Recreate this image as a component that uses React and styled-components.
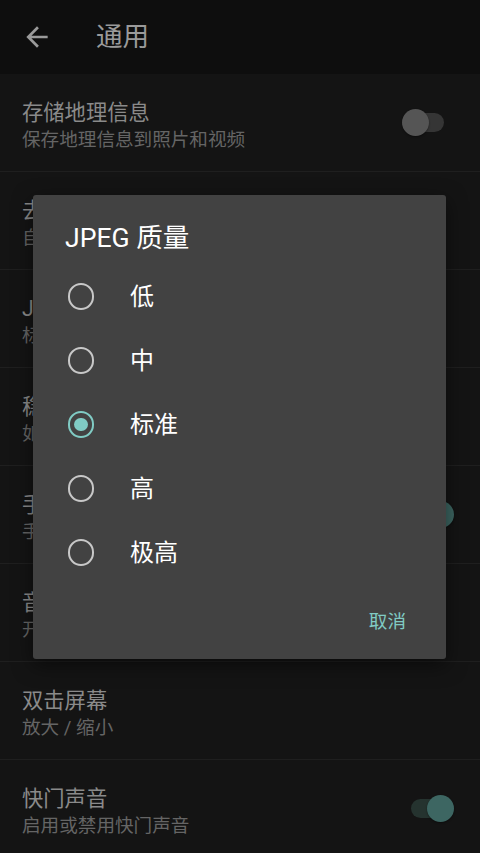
import React from 'react'
import styled, { createGlobalStyle } from 'styled-components'

const GlobalStyle = createGlobalStyle`
  html, body {
    margin: 0;
    padding: 0;
    background: #141414;
  }
  * {
    box-sizing: border-box;
  }
`;

const settings = [
    { title: '存储地理信息', summary: '保存地理信息到照片和视频', toggle: 'off' },
    { title: '去除闪烁', summary: '自动' },
    { title: 'JPEG 质量', summary: '标准' },
    { title: '稳定器', summary: '如果设备支持，则启用防抖' },
    { title: '手势拍照', summary: '手掌张开时自动拍照', toggle: 'on' },
    { title: '音量键', summary: '开始拍照' },
    { title: '双击屏幕', summary: '放大 / 缩小' },
    { title: '快门声音', summary: '启用或禁用快门声音', toggle: 'on' },
];

const qualities = ['低', '中', '标准', '高', '极高'];

function BackIcon() {
    return (
        <svg width="32" height="32" viewBox="0 0 24 24" fill="#9a9a9a">
            <path d="M20 11H7.83l5.59-5.59L12 4l-8 8 8 8 1.41-1.41L7.83 13H20v-2z" />
        </svg>
    )
}

function App() {
    const selected = '标准';

    return (
        <Page>
            <GlobalStyle />
            <AppBar>
                <BackButton><BackIcon /></BackButton>
                <AppTitle>通用</AppTitle>
            </AppBar>
            <List>
                {settings.map(item => (
                    <Row key={item.title}>
                        <RowText>
                            <RowTitle>{item.title}</RowTitle>
                            <RowSummary>{item.summary}</RowSummary>
                        </RowText>
                        {item.toggle && (
                            <Switch>
                                <Track $on={item.toggle === 'on'} />
                                <Thumb $on={item.toggle === 'on'} />
                            </Switch>
                        )}
                    </Row>
                ))}
            </List>

            <Overlay>
                <Dialog>
                    <DialogTitle>JPEG 质量</DialogTitle>
                    {qualities.map(q => (
                        <Option key={q}>
                            <RadioBox>
                                <Radio $checked={q === selected} />
                            </RadioBox>
                            <OptionLabel>{q}</OptionLabel>
                        </Option>
                    ))}
                    <ButtonBar>
                        <TextButton>取消</TextButton>
                    </ButtonBar>
                </Dialog>
            </Overlay>
        </Page>
    )
}

export default App;

const font = `Roboto, "Noto Sans CJK SC", "Noto Sans", sans-serif`;

const Page = styled.div`
    position: relative;
    width: 480px;
    height: 853px;
    overflow: hidden;
    background: #141414;
    font-family: ${font};
`;

const AppBar = styled.div`
    display: flex;
    align-items: center;
    height: 74px;
    padding-left: 21px;
    background: #0e0e0e;
`;

const BackButton = styled.div`
    display: flex;
    width: 32px;
    height: 32px;
    margin-right: 43px;
`;

const AppTitle = styled.div`
    color: #9a9a9a;
    font-size: 26.6px;
    line-height: 32px;
`;

const List = styled.div`
    display: flex;
    flex-direction: column;
`;

const Row = styled.div`
    display: flex;
    align-items: center;
    justify-content: space-between;
    flex-shrink: 0;
    height: 98px;
    padding: 0 26px 0 22px;
    border-bottom: 1px solid #1f1f1f;
`;

const RowText = styled.div`
    display: flex;
    flex-direction: column;
    padding-top: 6px;
`;

const RowTitle = styled.div`
    color: #8a8a8a;
    font-size: 21.3px;
    line-height: 28px;
`;

const RowSummary = styled.div`
    color: #656565;
    font-size: 18.6px;
    line-height: 26px;
`;

const Switch = styled.div`
    position: relative;
    width: 52px;
    height: 27px;
    flex-shrink: 0;
`;

const Track = styled.div`
    position: absolute;
    left: 9px;
    right: 10px;
    top: 4px;
    height: 19px;
    border-radius: 10px;
    background: ${p => p.$on ? '#25332f' : '#353535'};
`;

const Thumb = styled.div`
    position: absolute;
    top: 0;
    ${p => p.$on ? 'right: 0;' : 'left: 0;'}
    width: 27px;
    height: 27px;
    border-radius: 50%;
    background: ${p => p.$on ? '#3d6662' : '#555555'};
    box-shadow: 0 1px 2px rgba(0, 0, 0, 0.4);
`;

const Overlay = styled.div`
    position: absolute;
    inset: 0;
    display: flex;
    align-items: center;
    justify-content: center;
    padding-right: 1px;
`;

const Dialog = styled.div`
    display: flex;
    flex-direction: column;
    width: 413px;
    background: #424242;
    border-radius: 3px;
    box-shadow: 0 6px 20px rgba(0, 0, 0, 0.5);
`;

const DialogTitle = styled.div`
    padding: 27px 32px 11px;
    color: #ffffff;
    font-size: 26.6px;
    font-weight: 400;
    line-height: 32px;
`;

const Option = styled.div`
    display: flex;
    align-items: center;
    height: 64px;
    padding-left: 32px;
`;

const RadioBox = styled.div`
    display: flex;
    align-items: center;
    justify-content: center;
    width: 32px;
    height: 32px;
    margin-right: 33px;
`;

const Radio = styled.span`
    position: relative;
    width: 26.7px;
    height: 26.7px;
    border-radius: 50%;
    border: 2.7px solid ${p => p.$checked ? '#80cbc4' : '#c8c8c8'};

    &::after {
        content: '';
        display: ${p => p.$checked ? 'block' : 'none'};
        position: absolute;
        left: 50%;
        top: 50%;
        width: 13.3px;
        height: 13.3px;
        margin: -6.65px 0 0 -6.65px;
        border-radius: 50%;
        background: #80cbc4;
    }
`;

const OptionLabel = styled.div`
    color: #ffffff;
    font-size: 24px;
    line-height: 32px;
`;

const ButtonBar = styled.div`
    display: flex;
    align-items: center;
    justify-content: flex-end;
    height: 74px;
    padding-right: 40px;
`;

const TextButton = styled.div`
    color: #80cbc4;
    font-size: 18.6px;
    font-weight: 400;
    line-height: 24px;
`;
